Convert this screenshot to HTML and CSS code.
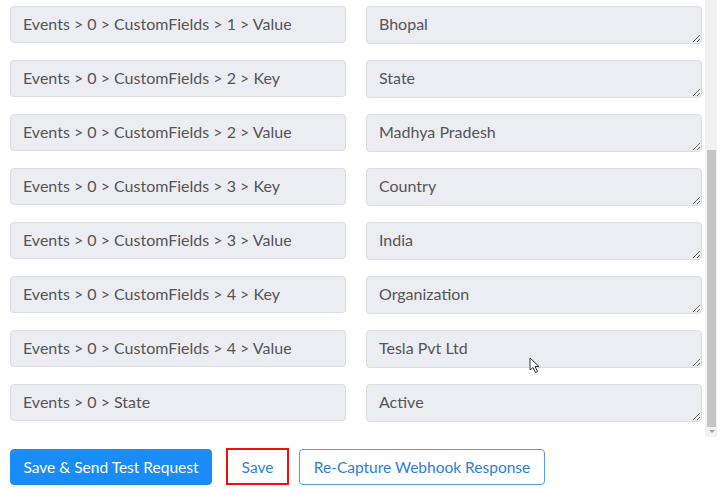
FILE: index.html
```html
<!DOCTYPE html>
<html lang="en">
<head>
    <meta charset="UTF-8">
    <meta name="viewport" content="width=device-width, initial-scale=1.0">
    <title>Webhook Response Mapping</title>
    <link rel="stylesheet" href="styles.css">
</head>
<body>

<div class="frame">
    <div class="fields">
        <div class="row">
            <div class="key">Events &gt; 0 &gt; CustomFields &gt; 1 &gt; Value</div>
            <textarea class="value" rows="1">Bhopal</textarea>
        </div>
        <div class="row">
            <div class="key">Events &gt; 0 &gt; CustomFields &gt; 2 &gt; Key</div>
            <textarea class="value" rows="1">State</textarea>
        </div>
        <div class="row">
            <div class="key">Events &gt; 0 &gt; CustomFields &gt; 2 &gt; Value</div>
            <textarea class="value" rows="1">Madhya Pradesh</textarea>
        </div>
        <div class="row">
            <div class="key">Events &gt; 0 &gt; CustomFields &gt; 3 &gt; Key</div>
            <textarea class="value" rows="1">Country</textarea>
        </div>
        <div class="row">
            <div class="key">Events &gt; 0 &gt; CustomFields &gt; 3 &gt; Value</div>
            <textarea class="value" rows="1">India</textarea>
        </div>
        <div class="row">
            <div class="key">Events &gt; 0 &gt; CustomFields &gt; 4 &gt; Key</div>
            <textarea class="value" rows="1">Organization</textarea>
        </div>
        <div class="row">
            <div class="key">Events &gt; 0 &gt; CustomFields &gt; 4 &gt; Value</div>
            <textarea class="value" rows="1">Tesla Pvt Ltd</textarea>
        </div>
        <div class="row">
            <div class="key">Events &gt; 0 &gt; State</div>
            <textarea class="value" rows="1">Active</textarea>
        </div>
    </div>
    <div class="scrollbar">
        <div class="thumb"></div>
        <div class="arrow"></div>
    </div>
</div>

<div class="actions">
    <button class="btn primary">Save &amp; Send Test Request</button>
    <div class="highlight">
        <button class="btn plain">Save</button>
    </div>
    <button class="btn outline">Re-Capture Webhook Response</button>
</div>

<!-- mouse pointer from the recording -->
<svg class="cursor" width="12" height="17" viewBox="0 0 12 17">
    <path d="M1 1 L1 13 L4 10.5 L6.5 15.5 L8.5 14.5 L6 9.5 L10 9.5 Z" fill="#fff" stroke="#333" stroke-width="1"/>
</svg>

</body>
</html>
```

FILE: styles.css
```css
body {
    margin: 0;
    padding: 0;
    background-color: #fff;
    font-family: Lato, "Open Sans", sans-serif;
    position: relative;
    width: 726px;
    height: 500px;
    overflow: hidden;
}
.frame {
    display: flex;
    height: 437px;
}
.fields {
    width: 705px;
    padding: 6px 0 0 10px;
    box-sizing: border-box;
}
.row {
    display: flex;
    gap: 20px;
    margin-bottom: 16px;
}
.key, .value {
    width: 336px;
    box-sizing: border-box;
    background-color: #ecedf2;
    border: 1px solid #dcdde3;
    border-radius: 4px;
    color: #555;
    font-family: Lato, "Open Sans", sans-serif;
    font-size: 16px;
}
.key {
    height: 37px;
    line-height: 34px;
    padding: 0 12px;
}
.value {
    height: 38px;
    margin: 0;
    padding: 6px 12px;
    line-height: 22px;
    resize: vertical;
    overflow: hidden;
}
.scrollbar {
    width: 12px;
    background-color: #f1f1f1;
    position: relative;
}
.thumb {
    margin: 150px 0 0 2px;
    width: 9px;
    height: 277px;
    background-color: #c4c4c4;
}
.arrow {
    margin: 3px 0 0 4px;
    width: 0;
    height: 0;
    border-left: 3px solid transparent;
    border-right: 3px solid transparent;
    border-top: 3px solid #a3a3a3;
}
.actions {
    display: flex;
    align-items: center;
    padding: 11px 0 0 10px;
}
.btn {
    height: 36px;
    padding: 0;
    border-radius: 4px;
    font-family: Lato, "Open Sans", sans-serif;
    font-size: 15.5px;
    white-space: nowrap;
    cursor: pointer;
    box-sizing: border-box;
}
.primary {
    width: 202px;
    background-color: #1a8cf5;
    border: 1px solid #1a8cf5;
    color: #fff;
}
.highlight {
    margin-left: 14px;
    border: 2px solid #ee1111;
    width: 63px;
    height: 37px;
    box-sizing: border-box;
    display: flex;
}
.plain {
    width: 100%;
    height: 100%;
    border: none;
    background: #fff;
    color: #2f84db;
}
.outline {
    margin-left: 10px;
    width: 246px;
    background-color: #fff;
    border: 1px solid #5a9ad8;
    color: #2f7fd6;
}
.cursor {
    position: absolute;
    left: 529px;
    top: 357px;
}
```
